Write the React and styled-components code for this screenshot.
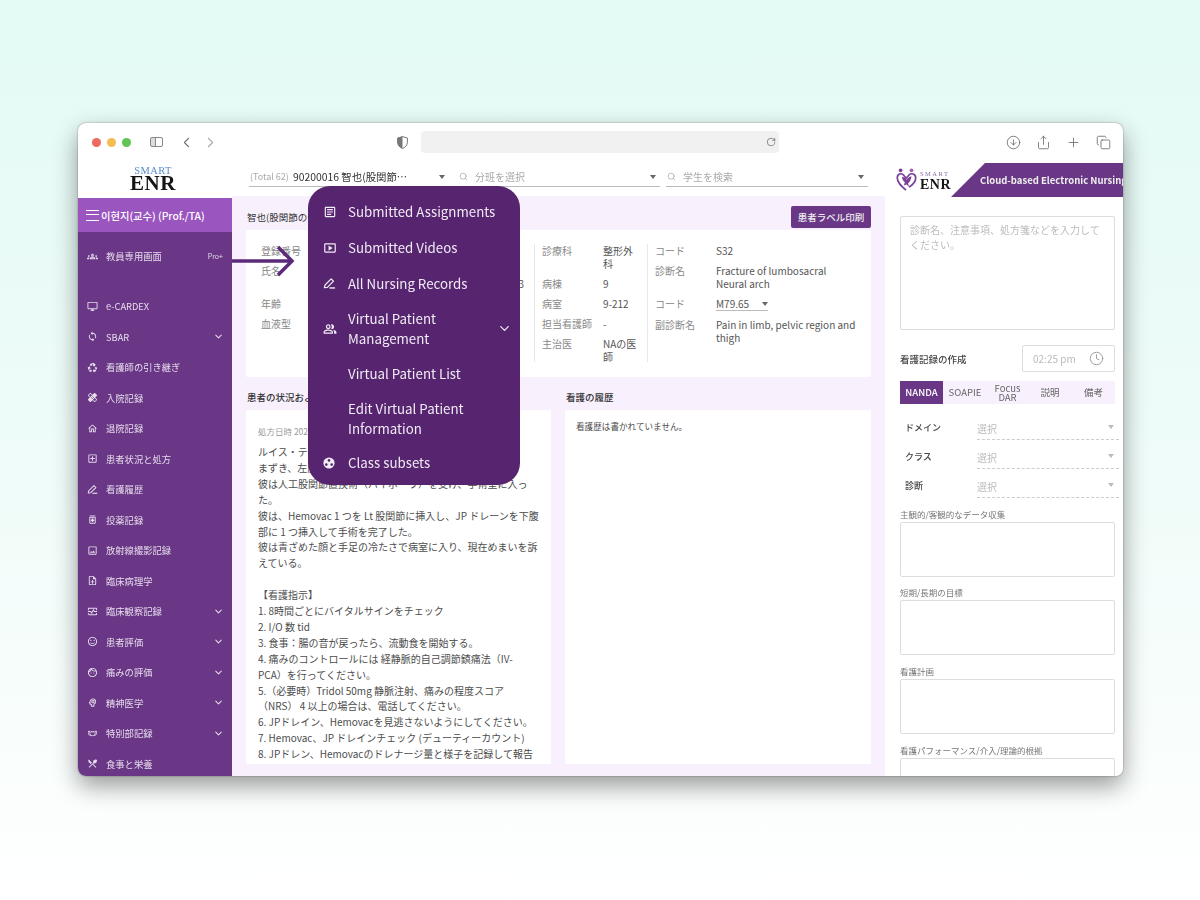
import React from 'react';
import styled, { createGlobalStyle } from 'styled-components';
import {
  ChevronDown, ChevronLeft, ChevronRight, RotateCw, CircleArrowDown, Share, Plus, Copy, Clock, Search,
} from 'lucide-react';
import {
  MdOutlineArticle, MdOutlineSmartDisplay, MdOutlinePeopleAlt, MdOutlineGroups,
  MdOutlineDesktopWindows, MdOutlineSync, MdRecycling, MdHealing, MdOutlineHome, MdOutlineAddBox,
  MdOutlineMedication, MdOutlineImage, MdOutlineNoteAdd, MdOutlineMonitorHeart,
  MdOutlineSentimentSatisfied, MdOutlineFace, MdOutlinePsychology, MdOutlineMasks, MdRestaurantMenu,
} from 'react-icons/md';

const FONT = '"Noto Sans CJK JP", "Noto Sans", sans-serif';

const GlobalStyle = createGlobalStyle`
  html, body { margin: 0; padding: 0; }
  body {
    height: 900px;
    overflow: hidden;
    font-family: ${FONT};
    background: linear-gradient(180deg, #e3faf5 0%, #f0fcf9 55%, #ffffff 100%);
  }
`;

const Page = styled.div`
  height: 900px;
  box-sizing: border-box;
  padding: 123px 77px 0 78px;
`;

const BrowserWindow = styled.div`
  position: relative;
  height: 653px;
  border-radius: 8px;
  background: #fff;
  overflow: hidden;
  box-shadow: 0 10px 24px rgba(0, 0, 0, 0.4), 0 0 2px rgba(0, 0, 0, 0.4);
`;

const Toolbar = styled.div`
  height: 36px;
  display: flex;
  align-items: center;
  padding: 2px 12px 0 14px;
  box-sizing: border-box;
  color: #777;
`;

const Lights = styled.div`
  display: flex;
  gap: 6px;
  margin-right: 19px;
`;

const Light = styled.span`
  width: 9px;
  height: 9px;
  border-radius: 50%;
  background: ${p => p.$color};
`;

const SidebarGlyph = styled.span`
  width: 13px;
  height: 10px;
  border: 1.2px solid #888;
  border-radius: 2px;
  box-sizing: border-box;
  margin-right: 15px;
  background: linear-gradient(90deg, #ddd 4px, #888 4px, #888 5px, transparent 5px);
`;

const NavGroup = styled.div`
  display: flex;
  gap: 7px;
  width: 219px;
`;

const AddressBar = styled.div`
  width: 358px;
  height: 22px;
  margin-left: 13px;
  border-radius: 4px;
  background: #f1f1f1;
  display: flex;
  align-items: center;
  justify-content: flex-end;
  padding-right: 3px;
  box-sizing: border-box;
  color: #777;
`;

const ToolIcons = styled.div`
  margin-left: auto;
  display: flex;
  gap: 15px;
  color: #666;
`;

const App = styled.div`
  display: grid;
  grid-template-columns: 154px 653px 238px;
  grid-template-rows: 37px 580px;
  height: 617px;
  filter: blur(0.45px);
`;

const LogoCell = styled.div`
  display: flex;
  flex-direction: column;
  align-items: center;
  justify-content: center;
  padding: 2px 4px 0 0;
`;

const LogoSmart = styled.span`
  font: 400 ${p => p.$small ? 6.5 : 10.5}px/8px "Liberation Serif", serif;
  letter-spacing: ${p => p.$small ? 1.5 : 0.4}px;
  color: ${p => p.$small ? '#8a6aa2' : '#5b8cc8'};
`;

const LogoEnr = styled.span`
  font: 700 ${p => p.$small ? 14 : 21}px/${p => p.$small ? 13 : 16}px "Liberation Serif", serif;
  letter-spacing: 0.5px;
  color: #151515;
`;

const TopBar = styled.div`
  display: flex;
  gap: 6px;
  padding: 0 17px 9px;
  align-items: flex-end;
`;

const Combo = styled.div`
  flex: ${p => p.$flex};
  height: 20px;
  display: flex;
  align-items: center;
  gap: ${p => p.$gap || 4}px;
  border-bottom: 1px solid #bbb;
  font-size: 10px;
  color: #aaa;
  padding: 0 4px 0 ${p => p.$pad || 0}px;
  white-space: nowrap;
  box-sizing: border-box;
`;

const ComboTotal = styled.span`
  font-size: 9px;
  margin-left: 1px;
`;

const ComboValue = styled.span`
  color: #333;
  font-size: 10.4px;
`;

const Caret = styled.span`
  margin-left: auto;
  width: 0;
  height: 0;
  border-left: 3.5px solid transparent;
  border-right: 3.5px solid transparent;
  border-top: 4px solid #666;
`;

const Sidebar = styled.nav`
  background: #6a3786;
  margin-top: 2px;
  overflow: hidden;
  color: #e6dcec;
`;

const SideHeader = styled.div`
  height: 34px;
  background: #9a55bf;
  display: flex;
  align-items: center;
  gap: 2px;
  padding-left: 8px;
  color: #fff;
  font-size: 10.3px;
  font-weight: 500;
  white-space: nowrap;
`;

const Burger = styled.span`
  flex: none;
  width: 13px;
  height: 9px;
  border-top: 1.2px solid #fff;
  border-bottom: 1.2px solid #fff;
  position: relative;
  &::after {
    content: '';
    position: absolute;
    left: 0;
    right: 0;
    top: 3px;
    height: 1.2px;
    background: #fff;
  }
`;

const SideList = styled.div`
  padding-top: 9px;
`;

const SideRow = styled.div`
  height: 30.5px;
  display: flex;
  align-items: center;
  padding: 0 8px 0 9px;
  margin-bottom: ${p => p.$gap || 0}px;
  font-size: 9.3px;
  white-space: nowrap;
  svg { flex: none; }
`;

const SideLabel = styled.span`
  margin-left: 8px;
`;

const Badge = styled.span`
  margin: 0 0 0 auto;
  padding-right: 1px;
  font-size: 7px;
`;

const SideChevron = styled(ChevronDown)`
  margin-left: auto;
`;

const Main = styled.main`
  background: #f8f1fd;
  padding: 8px 14px 0;
  overflow: hidden;
`;

const TitleRow = styled.div`
  height: 26px;
  display: flex;
  align-items: center;
  justify-content: space-between;
  padding-left: 1px;
  font-size: 9.5px;
  color: #333;
`;

const PrintButton = styled.button`
  width: 80px;
  height: 22px;
  border: 0;
  border-radius: 2px;
  background: #6a3786;
  color: #eee;
  font: 500 9.5px ${FONT};
  padding: 0;
`;

const PatientCard = styled.section`
  display: grid;
  grid-template-columns: 273px 113px 1fr;
  height: 147px;
  box-sizing: border-box;
  padding: 14px 0 0 15px;
  background: #fff;
  border-radius: 2px;
  font-size: 10px;
  line-height: 13px;
  color: #555;
`;

const InfoColumn = styled.div`
  height: 118px;
  display: grid;
  grid-template-columns: ${p => p.$cols};
  grid-auto-rows: min-content;
  row-gap: 7px;
  align-content: start;
  padding-left: ${p => p.$sep ? 7 : 0}px;
  border-left: ${p => p.$sep ? '1px solid #e8e8e8' : 0};
`;

const InfoLabel = styled.span`
  color: #888;
  margin-bottom: ${p => p.$gap || 0}px;
`;

const InfoValue = styled.span`
  color: #555;
  text-align: ${p => p.$right ? 'right' : 'left'};
`;

const CodeSelect = styled.span`
  display: flex;
  align-items: center;
  gap: 6px;
  width: 52px;
  border-bottom: 1px solid #bbb;
`;

const Columns = styled.div`
  display: grid;
  grid-template-columns: 305px 306px;
  gap: 14px;
  margin-top: 13px;
`;

const ColumnTitle = styled.h3`
  margin: 0 0 6px 1px;
  font-size: 9.5px;
  line-height: 14px;
  font-weight: 500;
  color: #333;
  white-space: nowrap;
`;

const ColumnBody = styled.div`
  height: 354px;
  box-sizing: border-box;
  background: #fff;
  border-radius: 2px;
  padding: 14px 12px 0;
  overflow: hidden;
  font-size: 10px;
  line-height: 15.9px;
  color: #4c4c4c;
`;

const DateLine = styled.div`
  font-size: 8.5px;
  line-height: 14px;
  color: #999;
  margin-bottom: 6px;
`;

const Line = styled.div`
  white-space: nowrap;
  min-height: 15.9px;
`;

const EmptyNote = styled.div`
  font-size: 8.6px;
  line-height: 12px;
  margin: -4px 0 0 -1px;
`;

const RightPanel = styled.aside`
  grid-row: 1 / 3;
  grid-column: 3;
  background: #fff;
  overflow: hidden;
`;

const BrandBar = styled.div`
  height: 36px;
  margin-top: 3px;
  display: flex;
  align-items: center;
`;

const BrandLogo = styled.div`
  flex: 0 0 66px;
  min-width: 0;
  box-sizing: border-box;
  display: flex;
  align-items: center;
  gap: 3px;
  padding-left: 11px;
`;

const BrandText = styled.div`
  display: flex;
  flex-direction: column;
  align-items: flex-start;
  flex: none;
`;

const Banner = styled.div`
  width: 172px;
  height: 34px;
  flex: none;
  display: flex;
  align-items: center;
  padding-left: 29px;
  box-sizing: border-box;
  background: #6a3786;
  clip-path: polygon(34px 0, 100% 0, 100% 100%, 0 100%);
  color: #eee;
  font-size: 9.5px;
  font-weight: 700;
  white-space: nowrap;
  overflow: hidden;
`;

const PanelBody = styled.div`
  padding: 18px 8px 0 15px;
`;

const NoteBox = styled.div`
  height: ${p => p.$height}px;
  box-sizing: border-box;
  border: 1px solid #ddd;
  border-radius: 2px;
  padding: ${p => p.$note ? '5px 9px' : 0};
  font-size: 10px;
  line-height: 15px;
  color: #bbb;
`;

const RecordHead = styled.div`
  display: flex;
  align-items: center;
  justify-content: space-between;
  height: 27px;
  margin-top: 15px;
  font-size: 9.5px;
  font-weight: 500;
  color: #444;
`;

const TimeBox = styled.div`
  width: 93px;
  height: 27px;
  box-sizing: border-box;
  display: flex;
  align-items: center;
  justify-content: space-between;
  padding: 0 10px;
  border: 1px solid #ddd;
  border-radius: 2px;
  font-size: 10px;
  font-weight: 400;
  color: #bbb;
  svg { color: #999; }
`;

const Tabs = styled.div`
  display: flex;
  height: 23px;
  margin-top: 9px;
  background: #f8f1fd;
`;

const Tab = styled.div`
  width: ${p => p.$width}px;
  display: flex;
  align-items: center;
  justify-content: center;
  text-align: center;
  font-size: 9.5px;
  line-height: 8.5px;
  font-weight: ${p => p.$active ? 500 : 400};
  color: ${p => p.$active ? '#fff' : '#666'};
  background: ${p => p.$active ? '#6a3786' : 'transparent'};
`;

const SelectGroup = styled.div`
  margin: 10px -4px 0 0;
`;

const SelectRow = styled.div`
  display: flex;
  height: 29px;
  align-items: center;
  font-size: 9px;
  font-weight: 500;
  color: #444;
`;

const SelectLabel = styled.span`
  width: 77px;
  padding-left: 5px;
  box-sizing: border-box;
  margin-top: -2px;
`;

const SelectField = styled.div`
  flex: 1;
  height: 21px;
  display: flex;
  align-items: center;
  padding-right: 5px;
  border-bottom: 1px dashed #ccc;
  font-size: 10px;
  font-weight: 400;
  color: #bbb;
  span { border-top-color: #bbb; margin-top: -2px; }
`;

const FieldLabel = styled.div`
  font-size: 8.5px;
  line-height: 13px;
  margin: ${p => p.$top}px 0 1px;
  color: #777;
  white-space: nowrap;
`;

const Popup = styled.div`
  position: absolute;
  left: 230px;
  top: 63px;
  width: 212px;
  height: 299px;
  box-sizing: border-box;
  background: #572570;
  border-radius: 22px;
  color: #f1ecf5;
  padding: 8px 0 0 15px;
  font-size: 13.3px;
  line-height: 19.5px;
  filter: blur(0.25px);
`;

const PopupRow = styled.div`
  display: flex;
  align-items: center;
  min-height: ${p => p.$height}px;
  padding-right: 8px;
`;

const PopupIcon = styled.span`
  width: 25px;
  flex: none;
  display: flex;
  svg { display: block; }
`;

const PopupText = styled.span`
  flex: 1;
`;

const Arrow = styled.svg`
  position: absolute;
  left: 154px;
  top: 122px;
`;

function PenIcon({ size = 14 }) {
  return (
    <svg width={size} height={size} viewBox="0 0 14 14" fill="none">
      <path d="M1.500 11.500 2.200 8.600 8.800 2l2.500 2.500-6.600 6.600-3.200.4Z" stroke="currentColor" strokeWidth="1.300" strokeLinejoin="round" />
      <path d="M7 11.800h6" stroke="currentColor" strokeWidth="1.500" />
    </svg>
  );
}

const sideItems = [
  { Icon: MdOutlineGroups, label: '教員専用画面', badge: 'Pro+', gap: 19.5 },
  { Icon: MdOutlineDesktopWindows, label: 'e-CARDEX' },
  { Icon: MdOutlineSync, label: 'SBAR', more: true },
  { Icon: MdRecycling, label: '看護師の引き継ぎ' },
  { Icon: MdHealing, label: '入院記録' },
  { Icon: MdOutlineHome, label: '退院記録' },
  { Icon: MdOutlineAddBox, label: '患者状況と処方' },
  { Icon: PenIcon, label: '看護履歴' },
  { Icon: MdOutlineMedication, label: '投薬記録' },
  { Icon: MdOutlineImage, label: '放射線撮影記録' },
  { Icon: MdOutlineNoteAdd, label: '臨床病理学' },
  { Icon: MdOutlineMonitorHeart, label: '臨床観察記録', more: true },
  { Icon: MdOutlineSentimentSatisfied, label: '患者評価', more: true },
  { Icon: MdOutlineFace, label: '痛みの評価', more: true },
  { Icon: MdOutlinePsychology, label: '精神医学', more: true },
  { Icon: MdOutlineMasks, label: '特別部記録', more: true },
  { Icon: MdRestaurantMenu, label: '食事と栄養' },
];

const bodyLines = [
  'ルイス・テイラーさんは、自宅の玄関の段差でつ',
  'まずき、左股関節の痛みを訴えて来院した。',
  '彼は人工股関節置換術（バイポーラ）を受け、手術室に入っ',
  'た。',
  '彼は、Hemovac 1 つを Lt 股関節に挿入し、JP ドレーンを下腹',
  '部に 1 つ挿入して手術を完了した。',
  '彼は青ざめた顔と手足の冷たさで病室に入り、現在めまいを訴',
  'えている。',
  '',
  '【看護指示】',
  '1. 8時間ごとにバイタルサインをチェック',
  '2. I/O 数 tid',
  '3. 食事：腸の音が戻ったら、流動食を開始する。',
  '4. 痛みのコントロールには 経静脈的自己調節鎮痛法（IV-',
  'PCA）を行ってください。',
  '5.（必要時）Tridol  50mg 静脈注射、痛みの程度スコア',
  '（NRS） 4 以上の場合は、電話してください。',
  '6. JPドレイン、Hemovacを見逃さないようにしてください。',
  '7. Hemovac、JP ドレインチェック (デューティーカウント)',
  '8. JPドレン、Hemovacのドレナージ量と様子を記録して報告',
];

function SubsetIcon() {
  return (
    <svg width="12" height="12" viewBox="0 0 12 12">
      <circle cx="6" cy="6" r="5.6" fill="#f1ecf5" />
      <circle cx="6" cy="3.400" r="1.300" fill="#572570" />
      <circle cx="3.300" cy="7.600" r="1.300" fill="#572570" />
      <circle cx="8.700" cy="7.600" r="1.300" fill="#572570" />
    </svg>
  );
}

function HeartLogo() {
  return (
    <svg width="25" height="28" viewBox="0 0 25 28" fill="none">
      <circle cx="5.500" cy="2.500" r="2.200" fill="#7b3f98" />
      <circle cx="18.500" cy="2.500" r="2.200" fill="#a45fb0" />
      <path d="M12 26C6 21 1.500 17 1.500 11.500 1.500 7 6 5 9 8l3 4 3.500-4c3-3 8-1 8 3.500 0 5-4 8.500-8 11" stroke="#7b3f98" strokeWidth="2" />
      <path d="M7 10c3 .5 5 2 5.500 4 1-2 3-4 6-4.500-.5 4-2 7-4 8.500l1 4-3-2.500-3 1 1-4C8.500 15 7.500 13 7 10Z" fill="#7b3f98" />
    </svg>
  );
}

export default function AppPage() {
  return (
    <Page>
      <GlobalStyle />
      <BrowserWindow>
        <Toolbar>
          <Lights>
            <Light $color="#ee6a5f" />
            <Light $color="#f5bd4f" />
            <Light $color="#61c454" />
          </Lights>
          <SidebarGlyph />
          <NavGroup>
            <ChevronLeft size={17} strokeWidth={1.5} />
            <ChevronRight size={17} strokeWidth={1.5} color="#aaa" />
          </NavGroup>
          <svg width="11" height="13" viewBox="0 0 11 13">
            <path d="M5.500.6 10.400 2v4.200c0 3-2 5-4.900 6.300C2.600 11.200.6 9.200.6 6.200V2L5.500.6Z" fill="none" stroke="#777" />
            <path d="M5.500.6V12.500C2.600 11.200.6 9.200.6 6.200V2L5.500.6Z" fill="#777" />
          </svg>
          <AddressBar><RotateCw size={10} /></AddressBar>
          <ToolIcons>
            <CircleArrowDown size={15} strokeWidth={1.3} />
            <Share size={15} strokeWidth={1.3} />
            <Plus size={15} strokeWidth={1.3} />
            <Copy size={15} strokeWidth={1.3} />
          </ToolIcons>
        </Toolbar>

        <App>
          <LogoCell>
            <LogoSmart>SMART</LogoSmart>
            <LogoEnr>ENR</LogoEnr>
          </LogoCell>

          <TopBar>
            <Combo $flex="0 0 200px">
              <ComboTotal>(Total 62)</ComboTotal>
              <ComboValue>90200016 智也(股関節…</ComboValue>
              <Caret />
            </Combo>
            <Combo $flex="0 0 205px" $pad={4} $gap={7}>
              <Search size={9} />
              <span>分班を選択</span>
              <Caret />
            </Combo>
            <Combo $flex="1" $pad={1} $gap={7}>
              <Search size={9} />
              <span>学生を検索</span>
              <Caret />
            </Combo>
          </TopBar>

          <Sidebar>
            <SideHeader>
              <Burger />
              <span>이현지(교수) (Prof./TA)</span>
            </SideHeader>
            <SideList>
              {sideItems.map(({ Icon, label, badge, gap, more }) => (
                <SideRow key={label} $gap={gap}>
                  <Icon size={11} />
                  <SideLabel>{label}</SideLabel>
                  {badge && <Badge>{badge}</Badge>}
                  {more && <SideChevron size={11} strokeWidth={2.2} />}
                </SideRow>
              ))}
            </SideList>
          </Sidebar>

          <Main>
            <TitleRow>
              <span>智也(股関節の骨折)</span>
              <PrintButton>患者ラベル印刷</PrintButton>
            </TitleRow>
            <PatientCard>
              <InfoColumn $cols="190px 73px">
                <InfoLabel>登録番号</InfoLabel><InfoValue>90200016</InfoValue>
                <InfoLabel $gap={13}>氏名</InfoLabel><InfoValue $right>&nbsp;<br />3</InfoValue>
                <InfoLabel>年齢</InfoLabel><InfoValue />
                <InfoLabel>血液型</InfoLabel><InfoValue />
              </InfoColumn>
              <InfoColumn $sep $cols="61px 39px">
                <InfoLabel>診療科</InfoLabel><InfoValue>整形外科</InfoValue>
                <InfoLabel>病棟</InfoLabel><InfoValue>9</InfoValue>
                <InfoLabel>病室</InfoLabel><InfoValue>9-212</InfoValue>
                <InfoLabel>担当看護師</InfoLabel><InfoValue>-</InfoValue>
                <InfoLabel>主治医</InfoLabel><InfoValue>NAの医師</InfoValue>
              </InfoColumn>
              <InfoColumn $sep $cols="61px 140px">
                <InfoLabel>コード</InfoLabel><InfoValue>S32</InfoValue>
                <InfoLabel>診断名</InfoLabel><InfoValue>Fracture of lumbosacral Neural arch</InfoValue>
                <InfoLabel>コード</InfoLabel>
                <InfoValue>
                  <CodeSelect>M79.65 <Caret /></CodeSelect>
                </InfoValue>
                <InfoLabel>副診断名</InfoLabel><InfoValue>Pain in limb, pelvic region and thigh</InfoValue>
              </InfoColumn>
            </PatientCard>
            <Columns>
              <div>
                <ColumnTitle>患者の状況および処方</ColumnTitle>
                <ColumnBody>
                  <DateLine>処方日時 2024-01-15</DateLine>
                  {bodyLines.map((line, i) => <Line key={i}>{line}</Line>)}
                </ColumnBody>
              </div>
              <div>
                <ColumnTitle>看護の履歴</ColumnTitle>
                <ColumnBody>
                  <EmptyNote>看護歴は書かれていません。</EmptyNote>
                </ColumnBody>
              </div>
            </Columns>
          </Main>

          <RightPanel>
            <BrandBar>
              <BrandLogo>
                <HeartLogo />
                <BrandText>
                  <LogoSmart $small>SMART</LogoSmart>
                  <LogoEnr $small>ENR</LogoEnr>
                </BrandText>
              </BrandLogo>
              <Banner>Cloud-based Electronic Nursing</Banner>
            </BrandBar>
            <PanelBody>
              <NoteBox $note $height={114}>診断名、注意事項、処方箋などを入力してください。</NoteBox>
              <RecordHead>
                <span>看護記録の作成</span>
                <TimeBox>02:25 pm <Clock size={15} strokeWidth={1.5} /></TimeBox>
              </RecordHead>
              <Tabs>
                <Tab $active $width={43}>NANDA</Tab>
                <Tab $width={44}>SOAPIE</Tab>
                <Tab $width={41}>Focus DAR</Tab>
                <Tab $width={44}>説明</Tab>
                <Tab $width={43}>備考</Tab>
              </Tabs>
              <SelectGroup>
                <SelectRow>
                  <SelectLabel>ドメイン</SelectLabel>
                  <SelectField>選択<Caret /></SelectField>
                </SelectRow>
                <SelectRow>
                  <SelectLabel>クラス</SelectLabel>
                  <SelectField>選択<Caret /></SelectField>
                </SelectRow>
                <SelectRow>
                  <SelectLabel>診断</SelectLabel>
                  <SelectField>選択<Caret /></SelectField>
                </SelectRow>
              </SelectGroup>
              <FieldLabel $top={7}>主観的/客観的なデータ収集</FieldLabel>
              <NoteBox $height={55} />
              <FieldLabel $top={9}>短期/長期の目標</FieldLabel>
              <NoteBox $height={55} />
              <FieldLabel $top={10}>看護計画</FieldLabel>
              <NoteBox $height={55} />
              <FieldLabel $top={10}>看護パフォーマンス/介入/理論的根拠</FieldLabel>
              <NoteBox $height={55} />
            </PanelBody>
          </RightPanel>
        </App>

        <Arrow width="64" height="32" viewBox="0 0 64 32" fill="none" stroke="#5b2a7a" strokeWidth="3.500">
          <path d="M0 16h59" />
          <path d="M46 2l14 14-14 14" />
        </Arrow>

        <Popup>
          <PopupRow $height={36}><PopupIcon><MdOutlineArticle size={14} /></PopupIcon><PopupText>Submitted Assignments</PopupText></PopupRow>
          <PopupRow $height={36}><PopupIcon><MdOutlineSmartDisplay size={14} /></PopupIcon><PopupText>Submitted Videos</PopupText></PopupRow>
          <PopupRow $height={35}><PopupIcon><PenIcon size={13} /></PopupIcon><PopupText>All Nursing Records</PopupText></PopupRow>
          <PopupRow $height={55}>
            <PopupIcon><MdOutlinePeopleAlt size={14} /></PopupIcon>
            <PopupText>Virtual Patient Management</PopupText>
            <ChevronDown size={15} strokeWidth={2} />
          </PopupRow>
          <PopupRow $height={36}><PopupIcon /><PopupText>Virtual Patient List</PopupText></PopupRow>
          <PopupRow $height={53}><PopupIcon /><PopupText>Edit Virtual Patient Information</PopupText></PopupRow>
          <PopupRow $height={36}><PopupIcon><SubsetIcon /></PopupIcon><PopupText>Class subsets</PopupText></PopupRow>
        </Popup>
      </BrowserWindow>
    </Page>
  );
}
